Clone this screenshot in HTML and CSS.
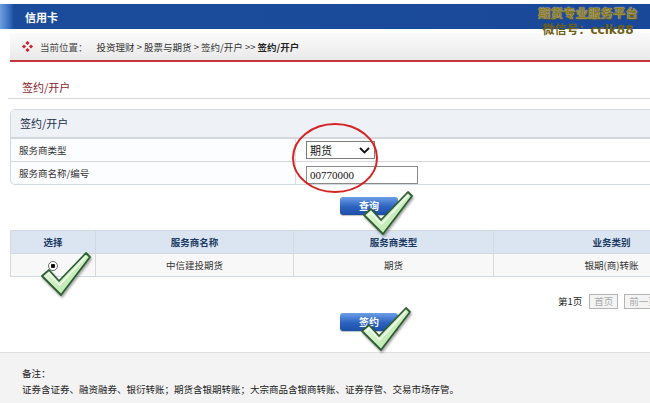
FILE: index.html
```
<!DOCTYPE html>
<html lang="zh-CN">
<head>
    <meta charset="UTF-8">
    <link rel="stylesheet" href="styles.css">
    <title>签约/开户</title>
</head>
<body>
    <svg class="defs" width="0" height="0">
        <defs>
            <linearGradient id="chkFill" x1="0" y1="0" x2="1" y2="1">
                <stop offset="0" stop-color="#f4fff0"/>
                <stop offset="1" stop-color="#a8e096"/>
            </linearGradient>
            <symbol id="check" viewBox="0 0 52 46">
                <path d="M2 25 L9 19 L19 30 L46 2 L50 6 L21 44 Z" fill="url(#chkFill)" stroke="#2f5d33" stroke-width="1.8" stroke-linejoin="round"/>
                <path d="M6 25 L9 22.5 L19.5 34 L46 5.5" fill="none" stroke="#ffffff" stroke-width="1.2" opacity="0.8"/>
            </symbol>
        </defs>
    </svg>

    <div class="page">
        <div class="topbar">
            <span class="topbar-title">信用卡</span>
        </div>

        <div class="crumb">
            <svg class="crumb-icon" width="11" height="11" viewBox="0 0 11 11">
                <rect x="4" y="0.5" width="3" height="3" fill="#c8202a" transform="rotate(45 5.5 2)"/>
                <rect x="4" y="7.5" width="3" height="3" fill="#c8202a" transform="rotate(45 5.5 9)"/>
                <rect x="0.5" y="4" width="3" height="3" fill="#c8202a" transform="rotate(45 2 5.5)"/>
                <rect x="7.5" y="4" width="3" height="3" fill="#c8202a" transform="rotate(45 9 5.5)"/>
            </svg>
            <span class="crumb-label">当前位置：</span>
            <span class="crumb-path">投资理财 &gt; 股票与期货 &gt; 签约/开户 &gt;&gt; <b>签约/开户</b></span>
        </div>

        <div class="page-title">签约/开户</div>

        <div class="panel">
            <div class="panel-head">签约/开户</div>
            <div class="panel-row">
                <div class="panel-label">服务商类型</div>
                <div class="panel-field">
                    <div class="select">
                        <span>期货</span>
                        <svg width="11" height="7" viewBox="0 0 11 7"><path d="M1 1 L5.5 5.5 L10 1" fill="none" stroke="#111" stroke-width="1.8"/></svg>
                    </div>
                </div>
            </div>
            <div class="panel-row">
                <div class="panel-label">服务商名称/编号</div>
                <div class="panel-field">
                    <input class="text-input" type="text" value="00770000">
                </div>
            </div>
        </div>

        <div class="btn-row first">
            <span class="btn">查询</span>
        </div>

        <table class="grid">
            <tr>
                <th class="c1">选择</th>
                <th class="c2">服务商名称</th>
                <th class="c3">服务商类型</th>
                <th class="c4">业务类别</th>
            </tr>
            <tr>
                <td><span class="radio"></span></td>
                <td>中信建投期货</td>
                <td>期货</td>
                <td>银期(商)转账</td>
            </tr>
        </table>

        <div class="pager">
            <span class="pager-info">第1页</span>
            <span class="pager-btn">首页</span>
            <span class="pager-btn">前一页</span>
        </div>

        <div class="btn-row second">
            <span class="btn">签约</span>
        </div>

        <div class="notes">
            <div>备注：</div>
            <div>证券含证券、融资融券、银衍转账；期货含银期转账；大宗商品含银商转账、证券存管、交易市场存管。</div>
        </div>
    </div>

    <!-- annotations drawn over the page -->
    <div class="watermark">
        <div class="wm-line1">期货专业服务平台</div>
        <div class="wm-line2">微信号：cclk88</div>
    </div>
    <svg class="ring" width="90" height="74" viewBox="0 0 90 74">
        <ellipse cx="45" cy="37" rx="42" ry="34" fill="none" stroke="#d42424" stroke-width="2"/>
    </svg>
    <svg class="check check-1" width="52" height="46"><use href="#check"/></svg>
    <svg class="check check-2" width="52" height="46"><use href="#check"/></svg>
    <svg class="check check-3" width="52" height="46"><use href="#check"/></svg>
</body>
</html>
```
FILE: styles.css
```
html, body {
    margin: 0;
    width: 650px;
    height: 403px;
    overflow: hidden;
    background: #ffffff;
}

body {
    position: relative;
    font-family: "Noto Sans CJK SC", "DejaVu Sans", sans-serif;
    font-size: 9.5px;
    color: #222;
}

.defs {
    position: absolute;
}

.page {
    width: 720px;
    display: flex;
    flex-direction: column;
}

.topbar {
    margin-top: 4px;
    height: 25px;
    background: linear-gradient(to right, #6f9fe0 0, #3f74c4 8px, #1b4c9c 14px, #1a4898 100%);
    display: flex;
    align-items: center;
}

.topbar-title {
    padding-left: 25px;
    color: #ffffff;
    font-weight: bold;
    font-size: 11px;
}

.crumb {
    margin: 4px 0 0 10px;
    height: 27px;
    background: linear-gradient(#fbfbfb, #e9e9e9);
    border-bottom: 2px solid #c4343a;
    display: flex;
    align-items: center;
}

.crumb-icon {
    margin-left: 12px;
}

.crumb-label {
    margin-left: 7px;
    color: #4a4a4a;
}

.crumb-path {
    margin-left: 9px;
    color: #333;
}

.crumb-path b {
    color: #222;
}

.page-title {
    margin-left: 8px;
    padding: 18px 0 4px 14px;
    line-height: 14px;
    font-size: 11px;
    color: #8b1e2e;
    border-bottom: 1px solid #d6d6d6;
}

.panel {
    margin: 10px 0 0 10px;
    border: 1px solid #d3d9e1;
    border-radius: 5px 0 0 5px;
    background: #fcfdfe;
    overflow: hidden;
}

.panel-head {
    height: 27px;
    line-height: 27px;
    padding-left: 9px;
    background: #eef2f7;
    color: #1c2e4a;
    font-size: 11px;
    border-bottom: 2px solid #d4d8de;
}

.panel-row {
    display: flex;
    height: 22px;
    border-bottom: 1px solid #d4d8de;
}

.panel-row:last-child {
    border-bottom: none;
}

.panel-label {
    width: 276px;
    padding-left: 8px;
    line-height: 22px;
    color: #333;
    border-right: 1px solid #dde1e6;
}

.panel-field {
    display: flex;
    align-items: center;
    padding-left: 10px;
    background: #ffffff;
    flex: 1;
}

.select {
    width: 60px;
    height: 16px;
    border: 1px solid #7d7d7d;
    display: flex;
    align-items: center;
    justify-content: space-between;
    padding: 0 4px 0 3px;
    font-size: 11px;
    color: #111;
    background: #fff;
}

.text-input {
    width: 104px;
    height: 14px;
    margin: 3px 0 0 0;
    padding: 1px 3px;
    border: 1px solid #8a8a8a;
    font-family: "Liberation Serif", serif;
    font-size: 11px;
    color: #111;
}

.btn-row {
    display: flex;
    padding-left: 340px;
}

.btn-row.first {
    margin-top: 12px;
}

.btn-row.second {
    margin-top: 4px;
}

.btn {
    width: 58px;
    height: 18px;
    line-height: 18px;
    text-align: center;
    color: #ffffff;
    font-weight: bold;
    font-size: 10px;
    border-radius: 3px;
    background: linear-gradient(#6c9ee6, #2c62c0 55%, #1d4ea6);
    box-shadow: 0 1px 1px rgba(0, 0, 0, 0.25);
}

.grid {
    margin: 15px 0 0 10px;
    border-collapse: collapse;
    width: 720px;
}

.grid th,
.grid td {
    height: 22px;
    padding: 0;
    text-align: center;
    border: 1px solid #d3d9e1;
}

.grid th {
    background: #dbe5f1;
    color: #1c3a64;
    font-weight: bold;
}

.grid td {
    background: #f8f8f8;
    color: #333;
}

.grid .c1 { width: 84px; }
.grid .c2 { width: 197px; }
.grid .c3 { width: 199px; }

.radio {
    display: inline-block;
    width: 8px;
    height: 8px;
    border: 1px solid #6a6a6a;
    border-radius: 50%;
    background: radial-gradient(circle, #111 0 2px, #fff 2.5px);
    vertical-align: middle;
}

.pager {
    margin-top: 16px;
    padding-left: 558px;
    display: flex;
    align-items: center;
    gap: 6px;
    height: 16px;
}

.pager-info {
    color: #222;
    margin-right: 1px;
}

.pager-btn {
    height: 13px;
    line-height: 13px;
    padding: 0 4px;
    border: 1px solid #b4b4b4;
    color: #a8a8a8;
    background: #f4f4f4;
}

.notes {
    margin-top: 21px;
    height: 51px;
    border-top: 1px solid #dedede;
    background: #f3f3f3;
    padding: 12px 0 0 22px;
    line-height: 16px;
    color: #222;
}

.watermark {
    position: absolute;
    top: 5px;
    left: 538px;
    text-align: center;
    font-weight: bold;
    line-height: 15px;
}

.wm-line1 {
    font-size: 12.5px;
    color: #8c7c1c;
    text-shadow: 0 0 1px #fff, 1px 1px 0 #4a4a10;
}

.wm-line2 {
    margin-top: 3px;
    font-size: 12px;
    color: #6e6014;
    font-family: "DejaVu Sans", "Noto Sans CJK SC", sans-serif;
}

.ring {
    position: absolute;
    left: 290px;
    top: 121px;
}

.check {
    position: absolute;
    filter: drop-shadow(1px 2px 1px rgba(0, 0, 0, 0.35));
}

.check-1 { left: 362px; top: 190px; }
.check-2 { left: 40px; top: 251px; }
.check-3 { left: 360px; top: 306px; }
```
